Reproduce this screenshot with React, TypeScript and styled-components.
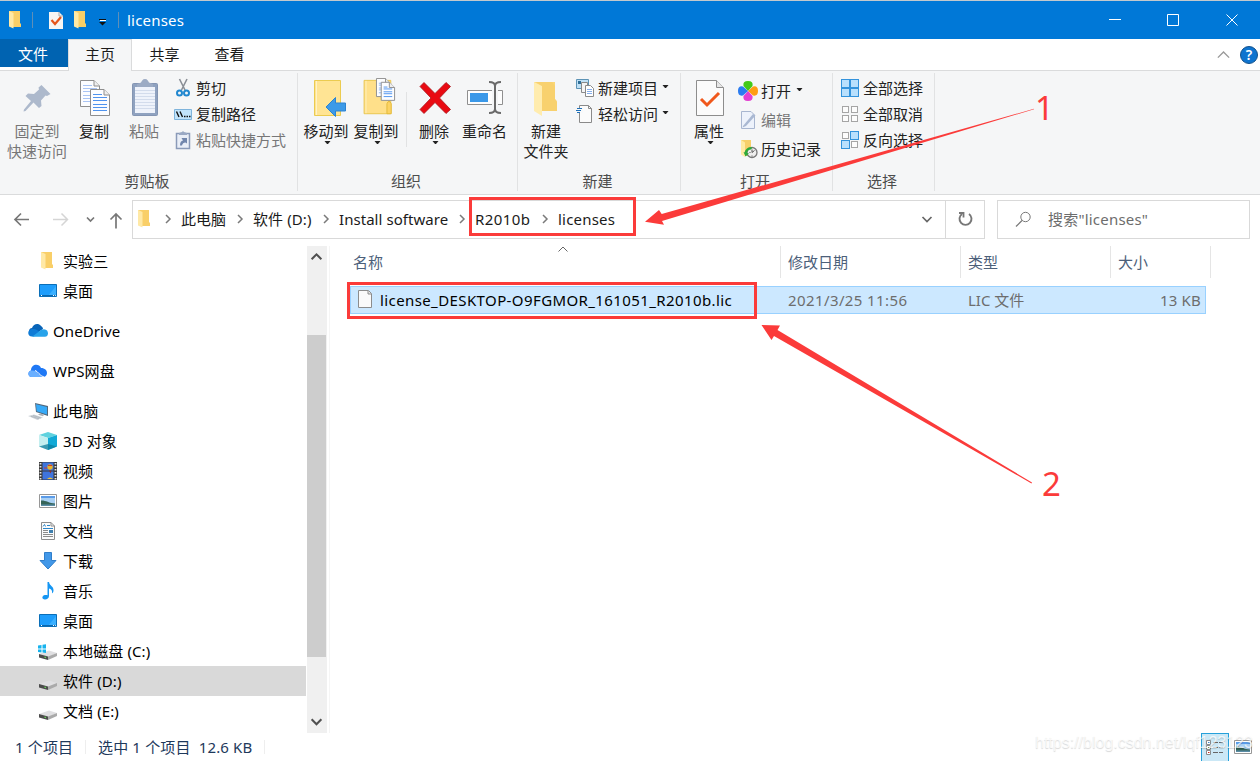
import { ReactNode } from "react";
import styled, { createGlobalStyle, css } from "styled-components";

/* ---------- icons ---------- */

type IconProps = { size?: number };

const Svg = ({
  size = 20,
  box = 20,
  children,
}: {
  size?: number;
  box?: number;
  children: ReactNode;
}) => (
  <svg width={size} height={size} viewBox={`0 0 ${box} ${box}`} fill="none">
    {children}
  </svg>
);

const Doc = ({ x, y, w, h, line = "#4f93ee", lines = 6 }: any) => (
  <g transform={`translate(${x} ${y})`}>
    <path
      d={`M.5 .5H${w - 6}L${w - 0.5} 6V${h - 0.5}H.5Z`}
      fill="#fcfdff"
      stroke="#8e8e8e"
    />
    <path d={`M${w - 6} .5V6H${w - 0.5}`} fill="#eee" stroke="#8e8e8e" />
    {Array.from({ length: lines }, (_, i) => {
      const step = (h - 8) / lines;
      const ly = Math.round(5 + i * step) + 0.5;
      return (
        <path key={i} d={`M3 ${ly}H${i === 0 ? w - 8 : w - 3}`} stroke={line} />
      );
    })}
  </g>
);

const PinIcon = () => (
  <Svg size={40} box={40}>
    <path
      d="M24.500 7L33.500 16l-3.500 2-1.500-.5-4.500 5 .5 5.500-2.500 2-5.500-5.500L8.500 33 6.500 33.500l.5-2L14 23 8.500 18l2.500-2.500 6 .5 5-4.500-.5-2Z"
      fill="#adb9cc"
    />
  </Svg>
);

const CopyIcon = () => (
  <Svg size={40} box={40}>
    <Doc x={6} y={2} w={20} h={27} line="#a9c4f4" />
    <Doc x={16} y={11} w={20} h={27} />
  </Svg>
);

const PasteIcon = () => (
  <Svg size={40} box={40}>
    <rect x="8.500" y="5.500" width="25" height="32" rx="1" fill="#8fa2c0" stroke="#8495b3" />
    <path d="M11 9H31V35H11Z" fill="#eff3fb" />
    {[12, 15, 18, 21, 24, 27, 30].map((y) => (
      <path key={y} d={`M11 ${y}.5H31`} stroke="#d3dcec" />
    ))}
    <path d="M13 9V6l4-1.500C18 3 18.500 1 21 1s3 2 4 3.500L29 6V9Z" fill="#9cabc4" />
  </Svg>
);

const MoveToIcon = () => (
  <Svg size={40} box={40}>
    <path d="M8.500 2.500H34.500V37.500H8.500Z" fill="#ffe494" stroke="#ebcb50" />
    <path d="M10.500 3V37" stroke="#fff3c5" />
    <path
      d="M20 29L29.500 19.500V25H39.500V33H29.500V38.500Z"
      fill="#3c9ae8"
      stroke="#2c83d0"
    />
  </Svg>
);

const CopyToIcon = () => (
  <Svg size={42} box={42}>
    <path d="M8.500 2.500H36.500V37.500H8.500Z" fill="#ffe08a" stroke="#e8c54c" />
    <path d="M10.500 3V37" stroke="#fff0bc" />
    <path d="M32.500 37.500V27q2-5 4.500 0V37.500Z" fill="#fcd364" stroke="#e3b93a" />
    <Doc x={21} y={0} w={16} h={20} line="#8fb5f2" lines={5} />
    <Doc x={26} y={4} w={15} h={20} lines={5} />
  </Svg>
);

const DeleteIcon = () => (
  <Svg size={40} box={40}>
    <path
      d="M6 8.500L10 4.500 21 15.500 32 4.500 36.500 8.500 25.500 20 36.500 31.500 32 35.500 21 24.500 10 35.500 6 31.500 17 20Z"
      fill="#e90a12"
      stroke="#a8141a"
      strokeWidth=".8"
    />
  </Svg>
);

const RenameIcon = () => (
  <Svg size={40} box={40}>
    <path d="M2.500 12.500H37.500V26.500H2.500Z" fill="#fdfdfd" stroke="#8f8f8f" />
    <path d="M5 15H23V24H5Z" fill="#3a98e8" />
    <path d="M27 12H33V27H27Z" fill="#f5f6f7" />
    <path
      d="M24 4c4 0 6 1 6 4V31c0 3-2 4-6 4M36 4c-4 0-6 1-6 4V31c0 3 2 4 6 4"
      stroke="#6a6a6a"
      strokeWidth="2"
    />
  </Svg>
);

const NewFolderIcon = () => (
  <Svg size={40} box={40}>
    <path d="M8 4H29V21l2 3V33H14Z" fill="#fbd777" />
    <path d="M8 4L16 8V38L8 33Z" fill="#ffecae" />
    <path d="M16 8V33H31V23l-2-2V8L26 4H10Z" fill="#f6ce6a" opacity=".65" />
  </Svg>
);

const PropertiesIcon = () => (
  <Svg size={40} box={40}>
    <path d="M7.500 2.500H27.500L34.500 9.500V37.500H7.500Z" fill="#fbfbfb" stroke="#8d8d8d" />
    <path d="M27.500 2.500V9.500H34.500" fill="#e6e6e6" stroke="#8d8d8d" />
    <path d="M12 21l6 6L30 15" stroke="#f0581c" strokeWidth="3" />
  </Svg>
);

const CutIcon = () => (
  <Svg>
    <path d="M5.500 1l5.500 11M13 1L7.500 12" stroke="#8a8f96" strokeWidth="1.600" />
    <circle cx="5.500" cy="15" r="2.500" stroke="#2187cf" strokeWidth="2" />
    <circle cx="12.500" cy="15" r="2.500" stroke="#2187cf" strokeWidth="2" />
  </Svg>
);

const CopyPathIcon = () => (
  <Svg>
    <path d="M.5 5.500H17.500V15.500H.5Z" fill="#c2e4fb" stroke="#7fb4dc" />
    <path
      d="M2.500 7.500l2.500 5.500M6 7.500L8.500 13M10 12.500h1.500M12.500 12.500H14M15 12.500h1.500"
      stroke="#111"
      strokeWidth="1.400"
    />
  </Svg>
);

const PasteShortcutIcon = () => (
  <Svg>
    <path d="M2.500 3.500H15.500V18.500H2.500Z" fill="#e9eef7" stroke="#8a9ab8" strokeWidth="1.500" />
    <path d="M5 5V3l3-1 1-1 1 1 3 1V5Z" fill="#9aa9c4" />
    <path d="M6 15.500c0-3 1-4.500 3-5L7.500 8H13v5.500L11.500 12.500c-2 0-3 1-3.500 3Z" fill="#7186ac" />
  </Svg>
);

const NewItemIcon = () => (
  <Svg>
    <path d="M.5 1.500H12.500V10.500H.5Z" fill="#bfe0f5" stroke="#5c93b5" />
    <path d="M2 3H5V6H2Z" fill="#2f6f98" />
    <path d="M5.500 4.500H11.500V14.500H5.500Z" fill="#f4f4f4" stroke="#8a8a8a" />
    <path d="M9.500 7.500H14.500L17.500 10.500V18.500H9.500Z" fill="#fff" stroke="#8a8a8a" />
    <path d="M11 11.500h5M11 13.500h5M11 15.500h5" stroke="#86aeea" />
  </Svg>
);

const EasyAccessIcon = () => (
  <Svg>
    <path d="M3.500 1.500H12.500L15.500 4.500V18.500H3.500Z" fill="#fbfbfb" stroke="#8a8a8a" />
    <path d="M12.500 1.500V4.500h3" stroke="#8a8a8a" />
    <path d="M2 4H7V9H2Z" fill="#f8f9fa" />
    <path d="M1 4.500H6M0 6.500H5M1 8.500H4" stroke="#1d6fb8" strokeWidth="1.200" />
  </Svg>
);

const OpenIcon = () => (
  <Svg>
    <path d="M10 10L5.500 5Q4.500 0 10 0T14.500 5Z" fill="#43c918" />
    <path d="M10 10L15 5.500Q20 4.500 20 10T15 14.500Z" fill="#ff9d12" />
    <path d="M10 10L5.500 15Q4.500 20 10 20T14.500 15Z" fill="#e33fd0" />
    <path d="M10 10L5 5.500Q0 4.500 0 10T5 14.500Z" fill="#2b7cf0" />
  </Svg>
);

const EditIcon = () => (
  <Svg>
    <path d="M3.500 1.500H13L16.500 5V18.500H3.500Z" fill="#edf2fb" stroke="#a8b6d0" />
    <path d="M5 16L15 4l2.500 1.500L8 16l-3.500 1.500Z" fill="#a9b8d2" />
  </Svg>
);

const HistoryIcon = () => (
  <Svg>
    <path d="M3 1H13V17H6Z" fill="#f7d06a" />
    <path d="M3 1L7 3.500V18L3 15.500Z" fill="#ffeaa3" />
    <circle cx="14" cy="13.500" r="5" fill="#eee" stroke="#777" strokeWidth="1.300" />
    <path d="M14 10.500v3l2.500-2M11.500 13.500h1M14 16.500v1" stroke="#555" />
    <path
      d="M6.500 13.500c1-4 4-6 8-5L13 10.500c-2 0-3.500 1-4 3.500l2 .5-3.500 3L5.500 13Z"
      fill="#2eaa3a"
    />
  </Svg>
);

const TILES = [
  [0, 1],
  [9, 1],
  [0, 10],
  [9, 10],
];

const TilesIcon = ({ on }: { on: number[] }) => (
  <Svg>
    {TILES.map(([x, y], i) => {
      const active = on.includes(i);
      const inset = active ? 0.5 : 1.5;
      const size = active ? 8 : 6;
      return (
        <rect
          key={i}
          x={x + inset}
          y={y + inset}
          width={size}
          height={size}
          fill={active ? "#b9e0fd" : "#fcfcfc"}
          stroke={active ? "#3493dc" : "#a5a5a5"}
        />
      );
    })}
  </Svg>
);

const FolderIcon = ({ size = 20 }: IconProps) => (
  <Svg size={size}>
    <path d="M3 1H14V13l1 1V17H6Z" fill="#f9cf68" />
    <path d="M3 1L7.500 3V18.500L3 16.500Z" fill="#ffe9a6" />
  </Svg>
);

const SmallPropsIcon = () => (
  <Svg>
    <path d="M2 2H12L16 6V19H2Z" fill="#f7f5f3" />
    <path d="M12 2V6H16" stroke="#aaa" />
    <path d="M4.500 10l3.500 4 6-7" stroke="#e6551b" strokeWidth="2.200" />
  </Svg>
);

const DesktopIcon = () => (
  <Svg>
    <path d="M1.500 3.500H18.500V15.500H1.500Z" fill="#1e9dfb" stroke="#0b6fb8" />
    <path d="M10 15L18 5V15Z" fill="#3bb0ff" />
    <path d="M2 14.500H18" stroke="#0b67ad" />
    <path d="M3 14.500h1M15 14.500h1M17 14.500h.8" stroke="#fff" />
  </Svg>
);

const OneDriveIcon = () => (
  <Svg>
    <path d="M4 13C0 13 0 7 4 7c1.500-4 6-5.500 9-2 1.500 1 2 2 2 3L9 12Z" fill="#0864b8" />
    <path d="M4 15.500c-5 0-5-7 0-7.500 3-.5 6 1 8 3L6 15.500Z" fill="#0f7bd6" />
    <path d="M4 15.800L13 9c5-2 7 1 7 3.500 0 2-1.500 3.300-3 3.300Z" fill="#28a3ea" />
  </Svg>
);

const WpsIcon = () => (
  <Svg>
    <path
      d="M3.500 16C-.5 16-.5 10 3 9.500 3 3 11 2 13 7c5 0 7 4 5.500 7-.6 1.300-2 2-3.500 2Z"
      fill="#1f78f5"
    />
    <path
      d="M3 9.500c4-.5 6 1 7.500 3 1.200 1.800 2.500 3.300 5 3.500H3.500C-.5 16-.5 10 3 9.500Z"
      fill="#6aafff"
    />
    <path d="M7 9.500c3 .5 4.500 5.500 9 6.500" stroke="#fff" />
  </Svg>
);

const ComputerIcon = () => (
  <Svg>
    <path d="M7 2L20 5V15L8 11Z" fill="#52687c" />
    <path d="M8 3.200L19 6V13.500L8.700 10.200Z" fill="#37aaf8" />
    <path d="M0 15L6 13.500l9 3L9.500 19Z" fill="#cdd3d8" />
    <path d="M3 15.300l8 2.500M5 14.500l8 2.500" stroke="#a0a8b0" strokeWidth=".6" />
    <path d="M12 12.500l4 1.200-1 1.500-5-1.500Z" fill="#a9afb6" />
  </Svg>
);

const CubeIcon = () => (
  <Svg>
    <path d="M1 4L10 1l9 3L10 7Z" fill="#5fd2de" />
    <path d="M1 4L10 7V19L1 15.500Z" fill="#c4eff0" />
    <path d="M19 4L10 7V19l9-3.500Z" fill="#12a9d6" />
    <path d="M1 15.500L10 13l9 2.500L10 19Z" fill="#0d7d9c" opacity=".75" />
  </Svg>
);

const VideoIcon = () => (
  <Svg>
    <path d="M1 1H19V19H1Z" fill="#3b3b3b" />
    <path d="M4.500 1.500H15.500V9.500H4.500ZM4.500 10.500H15.500V18.500H4.500Z" fill="#3f74dd" />
    <path
      d="M2.500 2V19M17.500 2V19"
      stroke="#e6e6e6"
      strokeWidth="1.800"
      strokeDasharray="1.600 1.400"
    />
    <circle cx="12" cy="6" r="2.700" fill="#e8b52b" />
    <path d="M10 4.500h4M6 7h3" stroke="#d33a2a" />
    <path d="M9 18q3-3 6 0Z" fill="#f0c534" />
    <path d="M11 9.500l1.500 3 1-3Z" fill="#952f20" />
  </Svg>
);

const PictureIcon = () => (
  <Svg>
    <path d="M1.500 3.500H18.500V16.500H1.500Z" fill="#fff" stroke="#979797" />
    <path d="M3 5H17V15H3Z" fill="#a9d0f4" />
    <path d="M3 5H17V7H3Z" fill="#5a9be8" />
    <path d="M3 9.500c4-.5 8 2.500 14 3V15H3Z" fill="#356458" />
    <path d="M3 13.500H17V15H3Z" fill="#5a8da6" />
  </Svg>
);

const DocumentIcon = () => (
  <Svg>
    <path d="M3.500 1.500H13L16.500 5V18.500H3.500Z" fill="#fbfbfb" stroke="#8d8d8d" />
    <path d="M13 1.500V5H16.500" stroke="#8d8d8d" />
    <path d="M5 5.500l1.500-2 1 2M9 4.500h3M5 7.500h10" stroke="#2d86c9" />
    <path d="M5 9.500h5M5 11.500h5M5 13.500h10M5 15.500h10" stroke="#8b8b8b" />
    <path d="M11 9H15V12H11Z" fill="#3f7fae" />
  </Svg>
);

const DownloadIcon = () => (
  <Svg>
    <path
      d="M6.500 1.500H13.500V9.500H18L10 18 2 9.500H6.500Z"
      fill="#4298e8"
      stroke="#2f7ecb"
    />
  </Svg>
);

const MusicIcon = () => (
  <Svg>
    <path
      d="M9.500 1H11c.5 4 5 4 4.500 9-.3 1.500-1 2-1.500 2.500C14.500 9 13 8 11 7.500V15c0 2-2 3.500-4 3.500-3.500 0-3.500-4 0-4.500 1-.2 2 0 2.500.3Z"
      fill="#1596f3"
    />
  </Svg>
);

const DriveIcon = ({ windows }: { windows?: boolean }) => (
  <Svg>
    <path d="M1 13L11 9.500l8 2.500L10 16Z" fill="#e0e0e2" />
    <path d="M1 13L10 15.500V19L1 16.500Z" fill="#4c4c4c" />
    <path d="M10 15.500l9-3.500v3L10 19Z" fill="#aaa" />
    <path d="M6.500 16.200l1.500.4" stroke="#69d65c" strokeWidth="1.200" />
    {windows && (
      <path
        d="M0 4.500L3.500 4V7.500H0ZM4.500 3.800L8 3.200V7.500H4.500ZM0 8.500H3.500V11.500L0 11ZM4.500 8.500H8V12L4.500 11.500Z"
        fill="#17b3ee"
      />
    )}
  </Svg>
);

const FileIcon = () => (
  <Svg>
    <path d="M2.500 .5H12.500L15.500 3.500V17.500H2.500Z" fill="#fafafa" stroke="#8c8c8c" />
    <path d="M12 1V4H15.500" fill="#e4e4e4" stroke="#8c8c8c" />
  </Svg>
);

const Chevron = ({ dir, color = "#666", w = 1.5, size = 12 }: any) => {
  const paths: Record<string, string> = {
    right: "M4 2L8 6 4 10",
    down: "M1.500 4L6 8.500 10.500 4",
    up: "M1.500 8.500L6 4 10.500 8.500",
  };
  return (
    <Svg size={size} box={12}>
      <path d={paths[dir]} stroke={color} strokeWidth={w} />
    </Svg>
  );
};

const Caret = () => (
  <svg width="7" height="4" viewBox="0 0 7 4">
    <path d="M.5 0H6.500L4 3H3Z" fill="#222" />
  </svg>
);

/* ---------- data ---------- */

const NAV = [
  { label: "实验三", icon: <FolderIcon />, level: 2 },
  { label: "桌面", icon: <DesktopIcon />, level: 2, gap: true },
  { label: "OneDrive", icon: <OneDriveIcon />, level: 1, gap: true },
  { label: "WPS网盘", icon: <WpsIcon />, level: 1, gap: true },
  { label: "此电脑", icon: <ComputerIcon />, level: 1 },
  { label: "3D 对象", icon: <CubeIcon />, level: 2 },
  { label: "视频", icon: <VideoIcon />, level: 2 },
  { label: "图片", icon: <PictureIcon />, level: 2 },
  { label: "文档", icon: <DocumentIcon />, level: 2 },
  { label: "下载", icon: <DownloadIcon />, level: 2 },
  { label: "音乐", icon: <MusicIcon />, level: 2 },
  { label: "桌面", icon: <DesktopIcon />, level: 2 },
  { label: "本地磁盘 (C:)", icon: <DriveIcon windows />, level: 2 },
  { label: "软件 (D:)", icon: <DriveIcon />, level: 2, selected: true },
  { label: "文档 (E:)", icon: <DriveIcon />, level: 2 },
];

const CRUMBS = [
  { label: "此电脑", width: 45, spacing: 0 },
  { label: "软件 (D:)", width: 59, spacing: 0.1 },
  { label: "Install software", width: 109, spacing: 0.05 },
  { label: "R2010b", width: 56, spacing: 0.4 },
  { label: "licenses", width: 57, spacing: 0.2 },
];

const BigButton = ({ icon, width, label, caret, muted }: any) => (
  <Big $width={width} $muted={muted}>
    {icon}
    {label.map((line: string) => (
      <BigLabel key={line}>{line}</BigLabel>
    ))}
    {caret && (
      <BigCaret>
        <Caret />
      </BigCaret>
    )}
  </Big>
);

const SmallButton = ({ icon, label, caret, muted }: any) => (
  <Small $muted={muted}>
    {icon}
    {label}
    {caret && <Caret />}
  </Small>
);

const App = () => (
  <Window>
    <GlobalStyle />
    <TitleBar>
      <FolderIcon />
      <TitleDivider $left={7} $right={14} />
      <SmallPropsIcon />
      <QuickFolder>
        <FolderIcon />
      </QuickFolder>
      <QuickCaret>
        <path d="M0 .5H7" stroke="#111" />
        <path d="M0 3H7L3.500 6.500Z" fill="#111" />
        <path d="M1 1.500H7" stroke="#fff" />
      </QuickCaret>
      <TitleDivider $left={13} $right={7} />
      <Title>licenses</Title>
      <WindowButtons viewBox="0 0 174 38">
        <path
          d="M23 18.500H35M81.500 13.500H92.500V24.500H81.500ZM140.500 13.500L151.500 24.500M151.500 13.500L140.500 24.500"
          stroke="#fff"
          fill="none"
        />
      </WindowButtons>
    </TitleBar>

    <Tabs>
      <FileTab>文件</FileTab>
      <ActiveTab>主页</ActiveTab>
      <Tab>共享</Tab>
      <Tab>查看</Tab>
      <TabTools>
        <Chevron dir="up" color="#999" w={1.1} size={15} />
        <Help>?</Help>
      </TabTools>
    </Tabs>

    <Ribbon>
      <Group $width={298}>
        <GroupBody>
          <BigButton icon={<PinIcon />} width={74} label={["固定到", "快速访问"]} muted />
          <BigButton icon={<CopyIcon />} width={40} label={["复制"]} />
          <BigButton icon={<PasteIcon />} width={60} label={["粘贴"]} muted />
          <SmallList>
            <SmallButton icon={<CutIcon />} label="剪切" />
            <SmallButton icon={<CopyPathIcon />} label="复制路径" />
            <SmallButton icon={<PasteShortcutIcon />} label="粘贴快捷方式" muted />
          </SmallList>
        </GroupBody>
        <GroupLabel>剪贴板</GroupLabel>
      </Group>
      <Group $width={220}>
        <GroupBody $indent={3}>
          <BigButton icon={<MoveToIcon />} width={50} label={["移动到"]} caret />
          <BigButton icon={<CopyToIcon />} width={50} label={["复制到"]} caret />
          <InnerDivider />
          <BigButton icon={<DeleteIcon />} width={54} label={["删除"]} caret />
          <BigButton icon={<RenameIcon />} width={47} label={["重命名"]} />
        </GroupBody>
        <GroupLabel>组织</GroupLabel>
      </Group>
      <Group $width={163}>
        <GroupBody>
          <BigButton icon={<NewFolderIcon />} width={56} label={["新建", "文件夹"]} />
          <SmallList $indent={2} $gap={2}>
            <SmallButton icon={<NewItemIcon />} label="新建项目" caret />
            <SmallButton icon={<EasyAccessIcon />} label="轻松访问" caret />
          </SmallList>
        </GroupBody>
        <GroupLabel>新建</GroupLabel>
      </Group>
      <Group $width={152}>
        <GroupBody>
          <BigButton icon={<PropertiesIcon />} width={56} label={["属性"]} caret />
          <SmallList $indent={1} $gap={3} $pitch={29}>
            <SmallButton icon={<OpenIcon />} label="打开" caret />
            <SmallButton icon={<EditIcon />} label="编辑" muted />
            <SmallButton icon={<HistoryIcon />} label="历史记录" />
          </SmallList>
        </GroupBody>
        <GroupLabel>打开</GroupLabel>
      </Group>
      <Group $width={102}>
        <GroupBody $indent={8}>
          <SmallList>
            <SmallButton icon={<TilesIcon on={[0, 1, 2, 3]} />} label="全部选择" />
            <SmallButton icon={<TilesIcon on={[]} />} label="全部取消" />
            <SmallButton icon={<TilesIcon on={[1, 2]} />} label="反向选择" />
          </SmallList>
        </GroupBody>
        <GroupLabel>选择</GroupLabel>
      </Group>
    </Ribbon>

    <AddressRow>
      <History viewBox="0 0 132 38">
        <path d="M29 19.500H15M21 13.500L15 19.500 21 25.500" stroke="#777" strokeWidth="1.700" />
        <path d="M53 19.500H67M61.500 13.500L67.500 19.500 61.500 25.500" stroke="#d5d5d5" strokeWidth="1.500" />
        <path d="M87 17.500L90.500 21 94 17.500" stroke="#777" strokeWidth="1.700" />
        <path d="M116 28.500V14M110.500 19.500L116 14 121.500 19.500" stroke="#777" strokeWidth="1.700" />
      </History>
      <AddressBox>
        <FolderIcon size={20} />
        {CRUMBS.map(({ label, width, spacing }) => (
          <CrumbItem key={label}>
            <ChevronCell>
              <Chevron dir="right" color="#7a7a7a" />
            </ChevronCell>
            <Crumb $width={width} $spacing={spacing}>
              {label}
            </Crumb>
          </CrumbItem>
        ))}
        <AddressTools>
          <Chevron dir="down" w={1.7} />
          <Refresh>
            <svg width="16" height="16" viewBox="0 0 16 16" fill="none">
              <path d="M12 3A6 6 0 1 1 5 3" stroke="#777" strokeWidth="1.900" />
              <path d="M2 2H6.500V6.500" stroke="#777" strokeWidth="1.800" />
            </svg>
          </Refresh>
        </AddressTools>
      </AddressBox>
      <SearchBox>
        <svg width="17" height="17" viewBox="0 0 17 17" fill="none">
          <circle cx="10.500" cy="6" r="4.700" stroke="#777" />
          <path d="M7 9.500L1 15.500" stroke="#777" strokeWidth="1.200" />
        </svg>
        搜索"licenses"
      </SearchBox>
    </AddressRow>

    <Main>
      <NavPane>
        {NAV.map((item, i) => (
          <NavRow key={i} $level={item.level} $gap={item.gap} $selected={item.selected}>
            {item.icon}
            {item.label}
          </NavRow>
        ))}
      </NavPane>
      <ScrollBar>
        <Chevron dir="up" color="#505050" w={1.9} size={13} />
        <Thumb />
        <Chevron dir="down" color="#505050" w={1.9} size={13} />
      </ScrollBar>
      <FileArea>
        <HeaderRow>
          <HeaderCell $width={428}>名称</HeaderCell>
          <HeaderCell $width={180}>修改日期</HeaderCell>
          <HeaderCell $width={150}>类型</HeaderCell>
          <HeaderCell $width={100}>大小</HeaderCell>
          <SortMark>
            <Chevron dir="up" color="#555" w={0.9} size={12} />
          </SortMark>
        </HeaderRow>
        <FileRow>
          <FileIcon />
          <FileName>license_DESKTOP-O9FGMOR_161051_R2010b.lic</FileName>
          <FileCell $width={180} $spacing={0.4}>
            2021/3/25 11:56
          </FileCell>
          <FileCell $width={150}>LIC 文件</FileCell>
          <FileSize>13 KB</FileSize>
        </FileRow>
      </FileArea>
    </Main>

    <StatusBar>
      <StatusItem $width={83}>1 个项目</StatusItem>
      <StatusItem $width={167}>选中 1 个项目&nbsp; 12.6 KB</StatusItem>
      <ViewButtons>
        <DetailsView>
          <svg width="20" height="20" viewBox="0 0 20 20" fill="none">
            <path
              d="M1.500 2.500h4v4h-4ZM1.500 7.500h4v4h-4ZM1.500 12.500h4v4h-4Z"
              fill="#fff"
              stroke="#8a8a8a"
            />
            <path
              d="M8 4.500h5M14 4.500h4M8 9.500h5M14 9.500h4M8 14.500h5M14 14.500h4"
              stroke="#666"
            />
            <path d="M3 4.500h1.500" stroke="#3f86c8" />
            <path d="M3 9.500h1.500" stroke="#799332" />
            <path d="M3 14.500h1.500" stroke="#c8281e" />
          </svg>
        </DetailsView>
        <PictureIcon />
      </ViewButtons>
    </StatusBar>

    <Frame $x={469} $y={197} $w={167} $h={39} />
    <Frame $x={347} $y={282} $w={410} $h={37} />
    <Arrows viewBox="0 0 1260 761">
      <path
        d="M645 221.700L659 210 661.700 214 1034 108.800 1034 109.300 662 221 664 224.700Z"
        fill="#fb3b3a"
      />
      <path
        d="M761.500 325L780 325.500 777.500 330 1032 482.500 1031.500 483.500 774 336 771.500 340Z"
        fill="#fb3b3a"
      />
    </Arrows>
    <Mark $x={1035} $y={87}>1</Mark>
    <Mark $x={1042} $y={463}>2</Mark>
    <Watermark>https://blog.csdn.net/lqf123123</Watermark>
  </Window>
);

export default App;

/* ---------- styles ---------- */

const GlobalStyle = createGlobalStyle`
  * {
    box-sizing: border-box;
  }

  body {
    margin: 0;
    overflow: hidden;
    background: #fff;
  }

  svg {
    display: block;
    flex-shrink: 0;
  }
`;

const Window = styled.div`
  position: relative;
  display: flex;
  flex-direction: column;
  width: 1260px;
  height: 761px;
  overflow: hidden;
  background: #fff;
  color: #1b1b1b;
  font-family: "Noto Sans", "Noto Sans CJK SC", sans-serif;
  font-size: 15px;
  line-height: 20px;
  white-space: nowrap;
`;

const TitleBar = styled.div`
  display: flex;
  align-items: center;
  height: 39px;
  padding-left: 6px;
  border-top: 1px solid #c3c9cd;
  background: #0078d7;
  color: #fff;
`;

const TitleDivider = styled.div<{ $left: number; $right: number }>`
  width: 1px;
  height: 16px;
  background: #5f8fb8;
  ${({ $left, $right }) => css`
    margin-left: ${$left - 1}px;
    margin-right: ${$right}px;
  `}
`;

const QuickFolder = styled.div`
  margin-left: 4px;
`;

const QuickCaret = styled.svg.attrs({ viewBox: "0 0 7 7" })`
  width: 7px;
  height: 7px;
  margin-left: 8px;
  margin-top: 5px;
`;

const Title = styled.div`
  flex: 1;
  padding-left: 1px;
  padding-bottom: 1px;
  letter-spacing: 0.2px;
`;

const WindowButtons = styled.svg`
  width: 174px;
  height: 38px;
`;

const Tabs = styled.div`
  display: flex;
  height: 32px;
  border-bottom: 1px solid #dadbdc;
`;

const Tab = styled.div`
  width: 65px;
  height: 31px;
  line-height: 30px;
  text-align: center;
`;

const FileTab = styled(Tab)`
  width: 68px;
  height: 28px;
  padding-right: 2px;
  background: #0063b1;
  color: #fff;
`;

const ActiveTab = styled(Tab)`
  width: 64px;
  height: 32px;
  border: 1px solid #dadbdc;
  border-bottom: 0;
  background: #f5f6f7;
  line-height: 28px;
`;

const TabTools = styled.div`
  display: flex;
  align-items: center;
  gap: 9px;
  margin-left: auto;
  padding-right: 2px;
`;

const Help = styled.div`
  width: 18px;
  height: 18px;
  border: 1px solid #12518c;
  border-radius: 50%;
  background: #0e74cf;
  color: #fff;
  font-size: 14px;
  font-weight: 600;
  line-height: 16px;
  text-align: center;
`;

const Ribbon = styled.div`
  display: flex;
  height: 124px;
  padding-top: 2px;
  border-bottom: 1px solid #dadbdc;
  background: #f5f6f7;
`;

const Group = styled.div<{ $width: number }>`
  display: flex;
  flex-direction: column;
  width: ${({ $width }) => $width}px;
  height: 118px;
  border-right: 1px solid #e1e2e3;
`;

const GroupBody = styled.div<{ $indent?: number }>`
  display: flex;
  flex: 1;
  padding-left: ${({ $indent = 0 }) => $indent}px;
`;

const GroupLabel = styled.div`
  height: 20px;
  padding-right: 3px;
  color: #4c4c4c;
  text-align: center;
`;

const Big = styled.div<{ $width: number; $muted?: boolean }>`
  display: flex;
  flex-direction: column;
  align-items: center;
  width: ${({ $width }) => $width}px;
  padding-top: 5px;
  color: ${({ $muted }) => ($muted ? "#777" : "#222")};

  > svg:first-child {
    height: 40px;
    margin-bottom: 3px;
  }
`;

const BigLabel = styled.span`
  height: 20px;
`;

const BigCaret = styled.div`
  padding-left: 3px;
`;

const InnerDivider = styled.div`
  width: 1px;
  height: 55px;
  margin: 19px 0 0 5px;
  background: #e1e2e3;
`;

const SmallList = styled.div<{ $indent?: number; $gap?: number; $pitch?: number }>`
  padding-left: ${({ $indent = 0 }) => $indent}px;

  > div {
    gap: ${({ $gap = 2 }) => $gap}px;
    height: ${({ $pitch = 26 }) => $pitch}px;
  }

  > div:first-child {
    margin-top: ${({ $pitch = 26 }) => ($pitch === 26 ? 2 : 3)}px;
  }
`;

const Small = styled.div<{ $muted?: boolean }>`
  display: flex;
  align-items: center;
  color: ${({ $muted }) => ($muted ? "#777" : "#222")};

  > svg:last-child:not(:first-child) {
    margin-left: 2px;
    margin-bottom: 2px;
  }
`;

const AddressRow = styled.div`
  display: flex;
  align-items: center;
  height: 51px;
  padding-bottom: 3px;
`;

const History = styled.svg`
  width: 132px;
  height: 38px;
  fill: none;
`;

const AddressBox = styled.div`
  display: flex;
  align-items: center;
  width: 853px;
  height: 39px;
  margin-right: 12px;
  border: 1px solid #d9d9d9;

  > svg {
    margin: 0 -1px 0 2px;
  }
`;

const CrumbItem = styled.div`
  display: flex;
  align-items: center;
`;

const ChevronCell = styled.div`
  display: flex;
  justify-content: center;
  width: 27px;
`;

const Crumb = styled.div<{ $width: number; $spacing: number }>`
  width: ${({ $width }) => $width}px;
  letter-spacing: ${({ $spacing }) => $spacing}px;
`;

const AddressTools = styled.div`
  display: flex;
  align-items: center;
  gap: 12px;
  height: 100%;
  margin-left: auto;
`;

const Refresh = styled.div`
  display: flex;
  align-items: center;
  justify-content: center;
  width: 39px;
  height: 100%;
  border-left: 1px solid #d9d9d9;
`;

const SearchBox = styled.div`
  display: flex;
  align-items: center;
  gap: 16px;
  width: 253px;
  height: 39px;
  padding-left: 17px;
  border: 1px solid #d9d9d9;
  color: #6d6d6d;
  letter-spacing: 0.2px;
`;

const Main = styled.div`
  display: flex;
  height: 487px;
`;

const NavPane = styled.div`
  width: 307px;
`;

const NavRow = styled.div<{ $level: number; $gap?: boolean; $selected?: boolean }>`
  display: flex;
  align-items: center;
  gap: 5px;
  width: 306px;
  height: 30px;
  color: #000;
  letter-spacing: 0.1px;
  ${({ $level, $gap, $selected }) => css`
    margin-bottom: ${$gap ? 10 : 0}px;
    padding-left: ${$level === 1 ? 28 : 38}px;
    background: ${$selected ? "#d9d9d9" : "transparent"};
  `}
`;

const ScrollBar = styled.div`
  display: flex;
  flex-direction: column;
  align-items: center;
  width: 20px;
  padding: 4px 1px 5px 0;
  background: #f0f0f0;

  > svg:last-child {
    margin-top: auto;
  }
`;

const Thumb = styled.div`
  width: 19px;
  height: 322px;
  margin-top: 72px;
  background: #cdcdcd;
`;

const FileArea = styled.div`
  flex: 1;
  margin-left: 2px;
  border-left: 1px solid #f5f5f5;
`;

const HeaderRow = styled.div`
  position: relative;
  display: flex;
  height: 32px;
  padding-left: 23px;
`;

const HeaderCell = styled.div<{ $width: number }>`
  width: ${({ $width }) => $width}px;
  border-right: 1px solid #e5e5e5;
  color: #4c607a;
  line-height: 32px;

  & + & {
    padding-left: 7px;
  }
`;

const SortMark = styled.div`
  position: absolute;
  top: -3px;
  left: 227px;
`;

const FileRow = styled.div`
  display: flex;
  align-items: center;
  width: 856px;
  height: 28px;
  margin: 8px 0 0 20px;
  padding-left: 5px;
  border: 1px solid #99d1ff;
  background: #cce8ff;
  color: #6d6d6d;
`;

const FileName = styled.div`
  width: 408px;
  padding-left: 4px;
  color: #000;
  letter-spacing: 0.4px;
`;

const FileCell = styled.div<{ $width: number; $spacing?: number }>`
  width: ${({ $width }) => $width}px;
  padding-left: 4px;
  letter-spacing: ${({ $spacing = 0 }) => $spacing}px;
`;

const FileSize = styled.div`
  flex: 1;
  padding-right: 4px;
  letter-spacing: 0.2px;
  text-align: right;
`;

const StatusBar = styled.div`
  display: flex;
  align-items: center;
  height: 28px;
  padding-left: 15px;
  color: #1e395b;
`;

const StatusItem = styled.div<{ $width: number }>`
  flex-shrink: 0;
  width: ${({ $width }) => $width}px;
  height: 14px;
  letter-spacing: 0.15px;
  line-height: 14px;

  /* short rule between the two counters and after the last one */
  &::after {
    content: "";
    float: right;
    width: 1px;
    height: 14px;
    margin-right: ${({ $width }) => ($width < 100 ? 12 : 0)}px;
    background: #eee;
  }
`;

const ViewButtons = styled.div`
  display: flex;
  align-items: center;
  gap: 4px;
  margin-left: auto;
  padding-right: 7px;
`;

const DetailsView = styled.div`
  display: flex;
  justify-content: center;
  width: 28px;
  height: 28px;
  padding-top: 4px;
  border: 1px solid #26a0da;
  border-bottom: 0;
  background: #cbe8f6;
`;

const Frame = styled.div<{ $x: number; $y: number; $w: number; $h: number }>`
  position: absolute;
  border: 3px solid #fb3b3a;
  ${({ $x, $y, $w, $h }) => css`
    left: ${$x}px;
    top: ${$y}px;
    width: ${$w}px;
    height: ${$h}px;
  `}
`;

const Arrows = styled.svg`
  position: absolute;
  inset: 0;
  width: 1260px;
  height: 761px;
  pointer-events: none;
`;

const Mark = styled.div<{ $x: number; $y: number }>`
  position: absolute;
  left: ${({ $x }) => $x}px;
  top: ${({ $y }) => $y}px;
  color: #fb3b3a;
  font-size: 33px;
  line-height: 42px;
`;

const Watermark = styled.div`
  position: absolute;
  top: 733px;
  left: 1035px;
  color: rgba(255, 255, 255, 0.75);
  font-family: "Liberation Sans", sans-serif;
  font-size: 16px;
  text-shadow: 0 1px 1px rgba(0, 0, 0, 0.16);
`;
